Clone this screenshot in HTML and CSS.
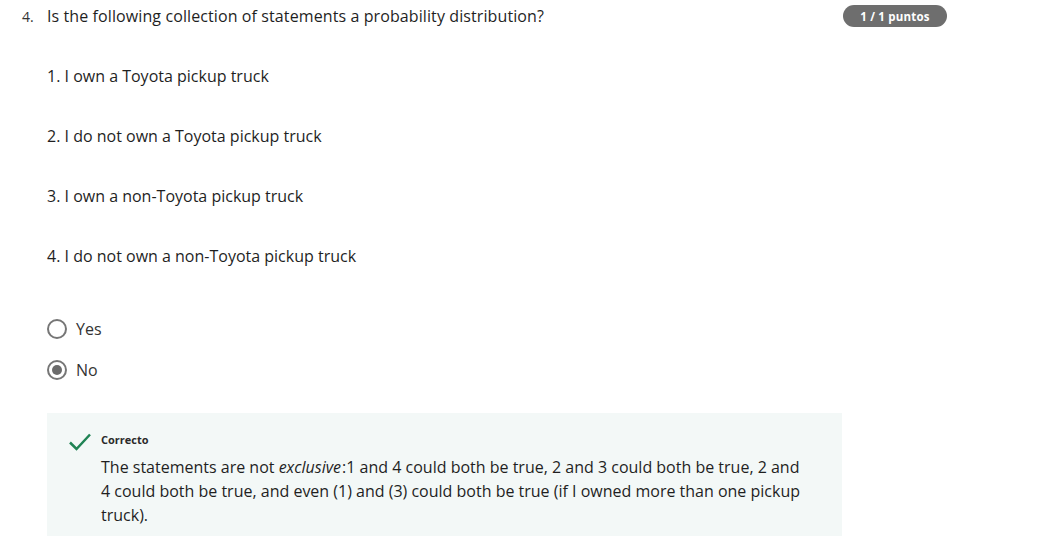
FILE: index.html
```html
<!DOCTYPE html>
<html>
<head>
<meta charset="utf-8">
<link rel="stylesheet" href="styles.css">
</head>
<body>
<div class="question">
  <div class="header">
    <span class="num">4.</span>
    <span class="title">Is the following collection of statements a probability distribution?</span>
    <span class="badge">1 / 1 puntos</span>
  </div>
  <div class="body">
    <p class="stmt">1. I own a Toyota pickup truck</p>
    <p class="stmt">2. I do not own a Toyota pickup truck</p>
    <p class="stmt">3. I own a non-Toyota pickup truck</p>
    <p class="stmt">4. I do not own a non-Toyota pickup truck</p>
    <div class="options">
      <div class="option"><span class="radio"></span><span>Yes</span></div>
      <div class="option"><span class="radio checked"></span><span>No</span></div>
    </div>
    <div class="feedback">
      <svg class="check" width="24" height="20" viewBox="0 0 24 20"><path d="M2 10.5 L8.5 17 L22 2.5" fill="none" stroke="#1f8354" stroke-width="2.5"/></svg>
      <div class="fb-text">
        <div class="fb-title">Correcto</div>
        <div class="fb-body">The statements are not <em class="emph">exclusive</em>:1 and 4 could both be true, 2 and 3 could both be true, 2 and 4 could both be true, and even (1) and (3) could both be true (if I owned more than one pickup truck).</div>
      </div>
    </div>
  </div>
</div>
</body>
</html>
```
FILE: styles.css
```css
* { box-sizing: border-box; }
body {
  margin: 0;
  background: #fff;
  font-family: "Open Sans", "Noto Sans", sans-serif;
  color: #1f1f1f;
  overflow: hidden;
}
.question {
  width: 1040px;
}
.header {
  display: flex;
  align-items: center;
  padding: 5px 0 0 22px;
  height: 27px;
}
.num {
  width: 25px;
  font-size: 14px;
  color: #333;
}
.title {
  width: 796px;
  font-size: 16px;
  letter-spacing: 0.1px;
  color: #1f1f1f;
}
.badge {
  background: #6e6e6e;
  color: #fff;
  font-size: 11.5px;
  font-weight: 700;
  border-radius: 11px;
  height: 22px;
  width: 104px;
  display: flex;
  align-items: center;
  justify-content: center;
  letter-spacing: 0.2px;
}
.body {
  display: flex;
  flex-direction: column;
  padding-left: 47px;
  padding-top: 38px;
}
.stmt {
  margin: 0 0 38px 0;
  font-size: 16px;
  line-height: 22px;
  height: 22px;
}
.options {
  display: flex;
  flex-direction: column;
  gap: 19px;
  margin-top: 13px;
}
.option {
  display: flex;
  align-items: center;
  height: 22px;
  font-size: 16px;
  color: #333;
}
.radio {
  width: 20px;
  height: 20px;
  border: 2px solid #767676;
  border-radius: 50%;
  margin-right: 9px;
  display: flex;
  align-items: center;
  justify-content: center;
}
.radio.checked::after {
  content: "";
  width: 10px;
  height: 10px;
  border-radius: 50%;
  background: #6b6b6b;
}
.feedback {
  margin-top: 32px;
  width: 795px;
  background: #f3f8f7;
  display: flex;
  padding: 19px 32px 20px 21px;
}
.check {
  margin-right: 9px;
  margin-top: 0;
  flex: none;
}
.fb-title {
  font-size: 11px;
  font-weight: 700;
  color: #2a2a2a;
  line-height: 16px;
}
.fb-body {
  margin-top: 7px;
  font-size: 16px;
  line-height: 24px;
  color: #1f1f1f;
}
.emph {
  display: inline-block;
  padding-right: 1px;
  line-height: 24px;
}
```
